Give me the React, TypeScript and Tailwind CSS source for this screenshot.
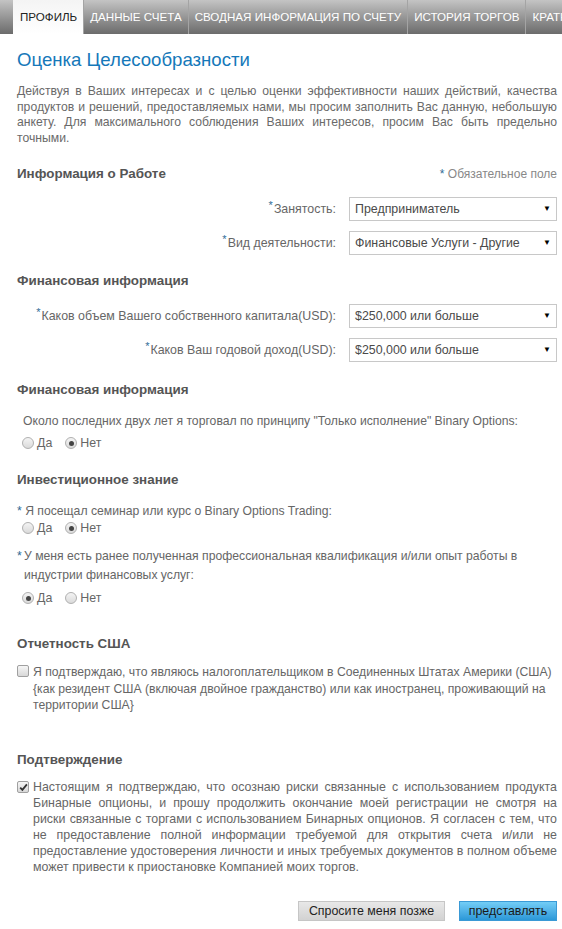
import React from "react";

const font = { fontFamily: '"Liberation Sans", Arial, sans-serif' };

function Radio({ checked }: { checked?: boolean }) {
  return (
    <span className="inline-flex h-[12px] w-[12px] items-center justify-center rounded-full border border-[#b0b0b0] bg-gradient-to-b from-[#f4f4f4] to-[#dadada]">
      {checked && <span className="h-[5px] w-[5px] rounded-full bg-[#444]" />}
    </span>
  );
}

function RadioPair({ yes }: { yes: boolean }) {
  return (
    <div className="flex items-center pl-[5px] text-[12.4px] leading-[16px] text-[#666]">
      <span className="flex items-center gap-[3px]">
        <Radio checked={yes} />
        <span>Да</span>
      </span>
      <span className="ml-[13px] flex items-center gap-[3px]">
        <Radio checked={!yes} />
        <span>Нет</span>
      </span>
    </div>
  );
}

function Checkbox({ checked }: { checked?: boolean }) {
  return (
    <span className="inline-flex h-[12px] w-[12px] shrink-0 items-center justify-center rounded-[2px] border border-[#a0a0a0] bg-gradient-to-b from-[#f6f6f6] to-[#d8d8d8]">
      {checked && (
        <svg width="9" height="9" viewBox="0 0 9 9">
          <path d="M1.2 4.6 L3.4 6.9 L7.9 1.4" fill="none" stroke="#333" strokeWidth="1.8" />
        </svg>
      )}
    </span>
  );
}

function SelectRow({ label, value, mt }: { label: string; value: string; mt: string }) {
  return (
    <div className={`flex items-center justify-end ${mt}`}>
      <span className="mr-[13px] text-[12.4px] text-[#666]">
        <span className="relative -top-[4px] mr-[1px] text-[11px] text-[#2f6c96]">*</span>
        {label}
      </span>
      <div className="flex h-[24px] w-[208px] items-center justify-between border border-[#c8c8c8] bg-white pl-[5px] pr-[5px] text-[12.4px] text-[#4a4a4a]">
        <span>{value}</span>
        <span className="text-[8px] text-black">▼</span>
      </div>
    </div>
  );
}

function Heading({ children, mt }: { children: React.ReactNode; mt: string }) {
  return <div className={`${mt} text-[13.4px] font-bold leading-[16px] text-[#555]`}>{children}</div>;
}

const tabs = ["ДАННЫЕ СЧЕТА", "СВОДНАЯ ИНФОРМАЦИЯ ПО СЧЕТУ", "ИСТОРИЯ ТОРГОВ", "КРАТКАЯ ИНФОРМАЦИЯ"];

export default function App() {
  return (
    <div style={font} className="h-[929px] w-[562px] overflow-hidden bg-white">
      <div className="flex h-[34px] overflow-hidden whitespace-nowrap bg-gradient-to-b from-[#c4c4c4] to-[#6c6c6c] pl-[13px]">
        <div className="flex items-center bg-gradient-to-b from-[#f4f4f4] to-white pl-[7px] pr-[6px] text-[11.6px] text-[#222]">
          ПРОФИЛЬ
        </div>
        {tabs.map((t) => (
          <div
            key={t}
            className="flex items-center border-l border-[#a4a4a4] px-[6px] text-[11.6px] text-white"
          >
            {t}
          </div>
        ))}
      </div>

      <div className="pl-[17px] pr-[5px]">
        <h1 className="mt-[15px] text-[18.6px] leading-[22px] text-[#1578b9]">Оценка Целесообразности</h1>
        <p className="mt-[13px] text-justify text-[12.2px] leading-[15.5px] text-[#6a6a6a]">
          Действуя в Ваших интересах и с целью оценки эффективности наших действий, качества продуктов и
          решений, предоставляемых нами, мы просим заполнить Вас данную, небольшую анкету. Для максимального
          соблюдения Ваших интересов, просим Вас быть предельно точными.
        </p>

        <div className="mt-[20px] flex items-center justify-between">
          <Heading mt="mt-0">Информация о Работе</Heading>
          <span className="text-[12px] leading-[16px] text-[#888]">
            <span className="text-[#2f6c96]">*</span> Обязательное поле
          </span>
        </div>
        <SelectRow mt="mt-[15px]" label="Занятость:" value="Предприниматель" />
        <SelectRow mt="mt-[10px]" label="Вид деятельности:" value="Финансовые Услуги - Другие" />

        <Heading mt="mt-[18px]">Финансовая информация</Heading>
        <SelectRow mt="mt-[15px]" label="Каков объем Вашего собственного капитала(USD):" value="$250,000 или больше" />
        <SelectRow mt="mt-[10px]" label="Каков Ваш годовой доход(USD):" value="$250,000 или больше" />

        <Heading mt="mt-[20px]">Финансовая информация</Heading>
        <div className="mt-[15px] pl-[6px] text-[12.2px] leading-[16px] text-[#666]">
          Около последних двух лет я торговал по принципу "Только исполнение" Binary Options:
        </div>
        <div className="mt-[6px]">
          <RadioPair yes={false} />
        </div>

        <Heading mt="mt-[21px]">Инвестиционное знание</Heading>
        <div className="mt-[15px] text-[12.2px] leading-[16px] text-[#666]">
          <span className="text-[#2f6c96]">*</span> Я посещал семинар или курс о Binary Options Trading:
        </div>
        <div className="mt-[1px]">
          <RadioPair yes={false} />
        </div>
        <div className="mt-[11px] flex text-[12.2px] leading-[19px] text-[#666]">
          <span className="w-[7px] shrink-0 text-[#2f6c96]">*</span>
          <span>
            У меня есть ранее полученная профессиональная квалификация и/или опыт работы в индустрии
            финансовых услуг:
          </span>
        </div>
        <div className="mt-[5px]">
          <RadioPair yes={true} />
        </div>

        <Heading mt="mt-[30px]">Отчетность США</Heading>
        <div className="mt-[12px] flex items-start text-[12.2px] leading-[16.5px] text-[#666]">
          <span className="mt-[1px]">
            <Checkbox />
          </span>
          <span className="ml-[4px]">
            Я подтверждаю, что являюсь налогоплательщиком в Соединенных Штатах Америки (США) {"{"}как резидент
            США (включая двойное гражданство) или как иностранец, проживающий на территории США{"}"}
          </span>
        </div>

        <Heading mt="mt-[38px]">Подтверждение</Heading>
        <div className="mt-[11px] flex items-start text-[12.4px] leading-[16px] text-[#666]">
          <span className="mt-[1px]">
            <Checkbox checked />
          </span>
          <span className="ml-[4px] text-justify">
            Настоящим я подтверждаю, что осознаю риски связанные с использованием продукта Бинарные опционы, и
            прошу продолжить окончание моей регистрации не смотря на риски{"\u00a0"}связанные с торгами с
            использованием Бинарных опционов. Я согласен с тем, что не предоставление полной информации требуемой
            для открытия счета и/или не предоставление удостоверения личности и иных требуемых документов в
            полном объеме может привести к приостановке Компанией моих торгов.
          </span>
        </div>

        <div className="mt-[26px] flex justify-end gap-[14px]">
          <button className="h-[20px] w-[147px] border border-[#c6c6c6] bg-gradient-to-b from-[#e8e8e8] to-[#d2d2d2] text-[12.4px] leading-[18px] text-[#222]">
            Спросите меня позже
          </button>
          <button className="h-[20px] w-[98px] border border-[#3a9ad6] bg-gradient-to-b from-[#72cdf6] to-[#2a98d8] text-[12.4px] leading-[18px] text-[#1a1a1a]">
            представлять
          </button>
        </div>
      </div>
    </div>
  );
}
